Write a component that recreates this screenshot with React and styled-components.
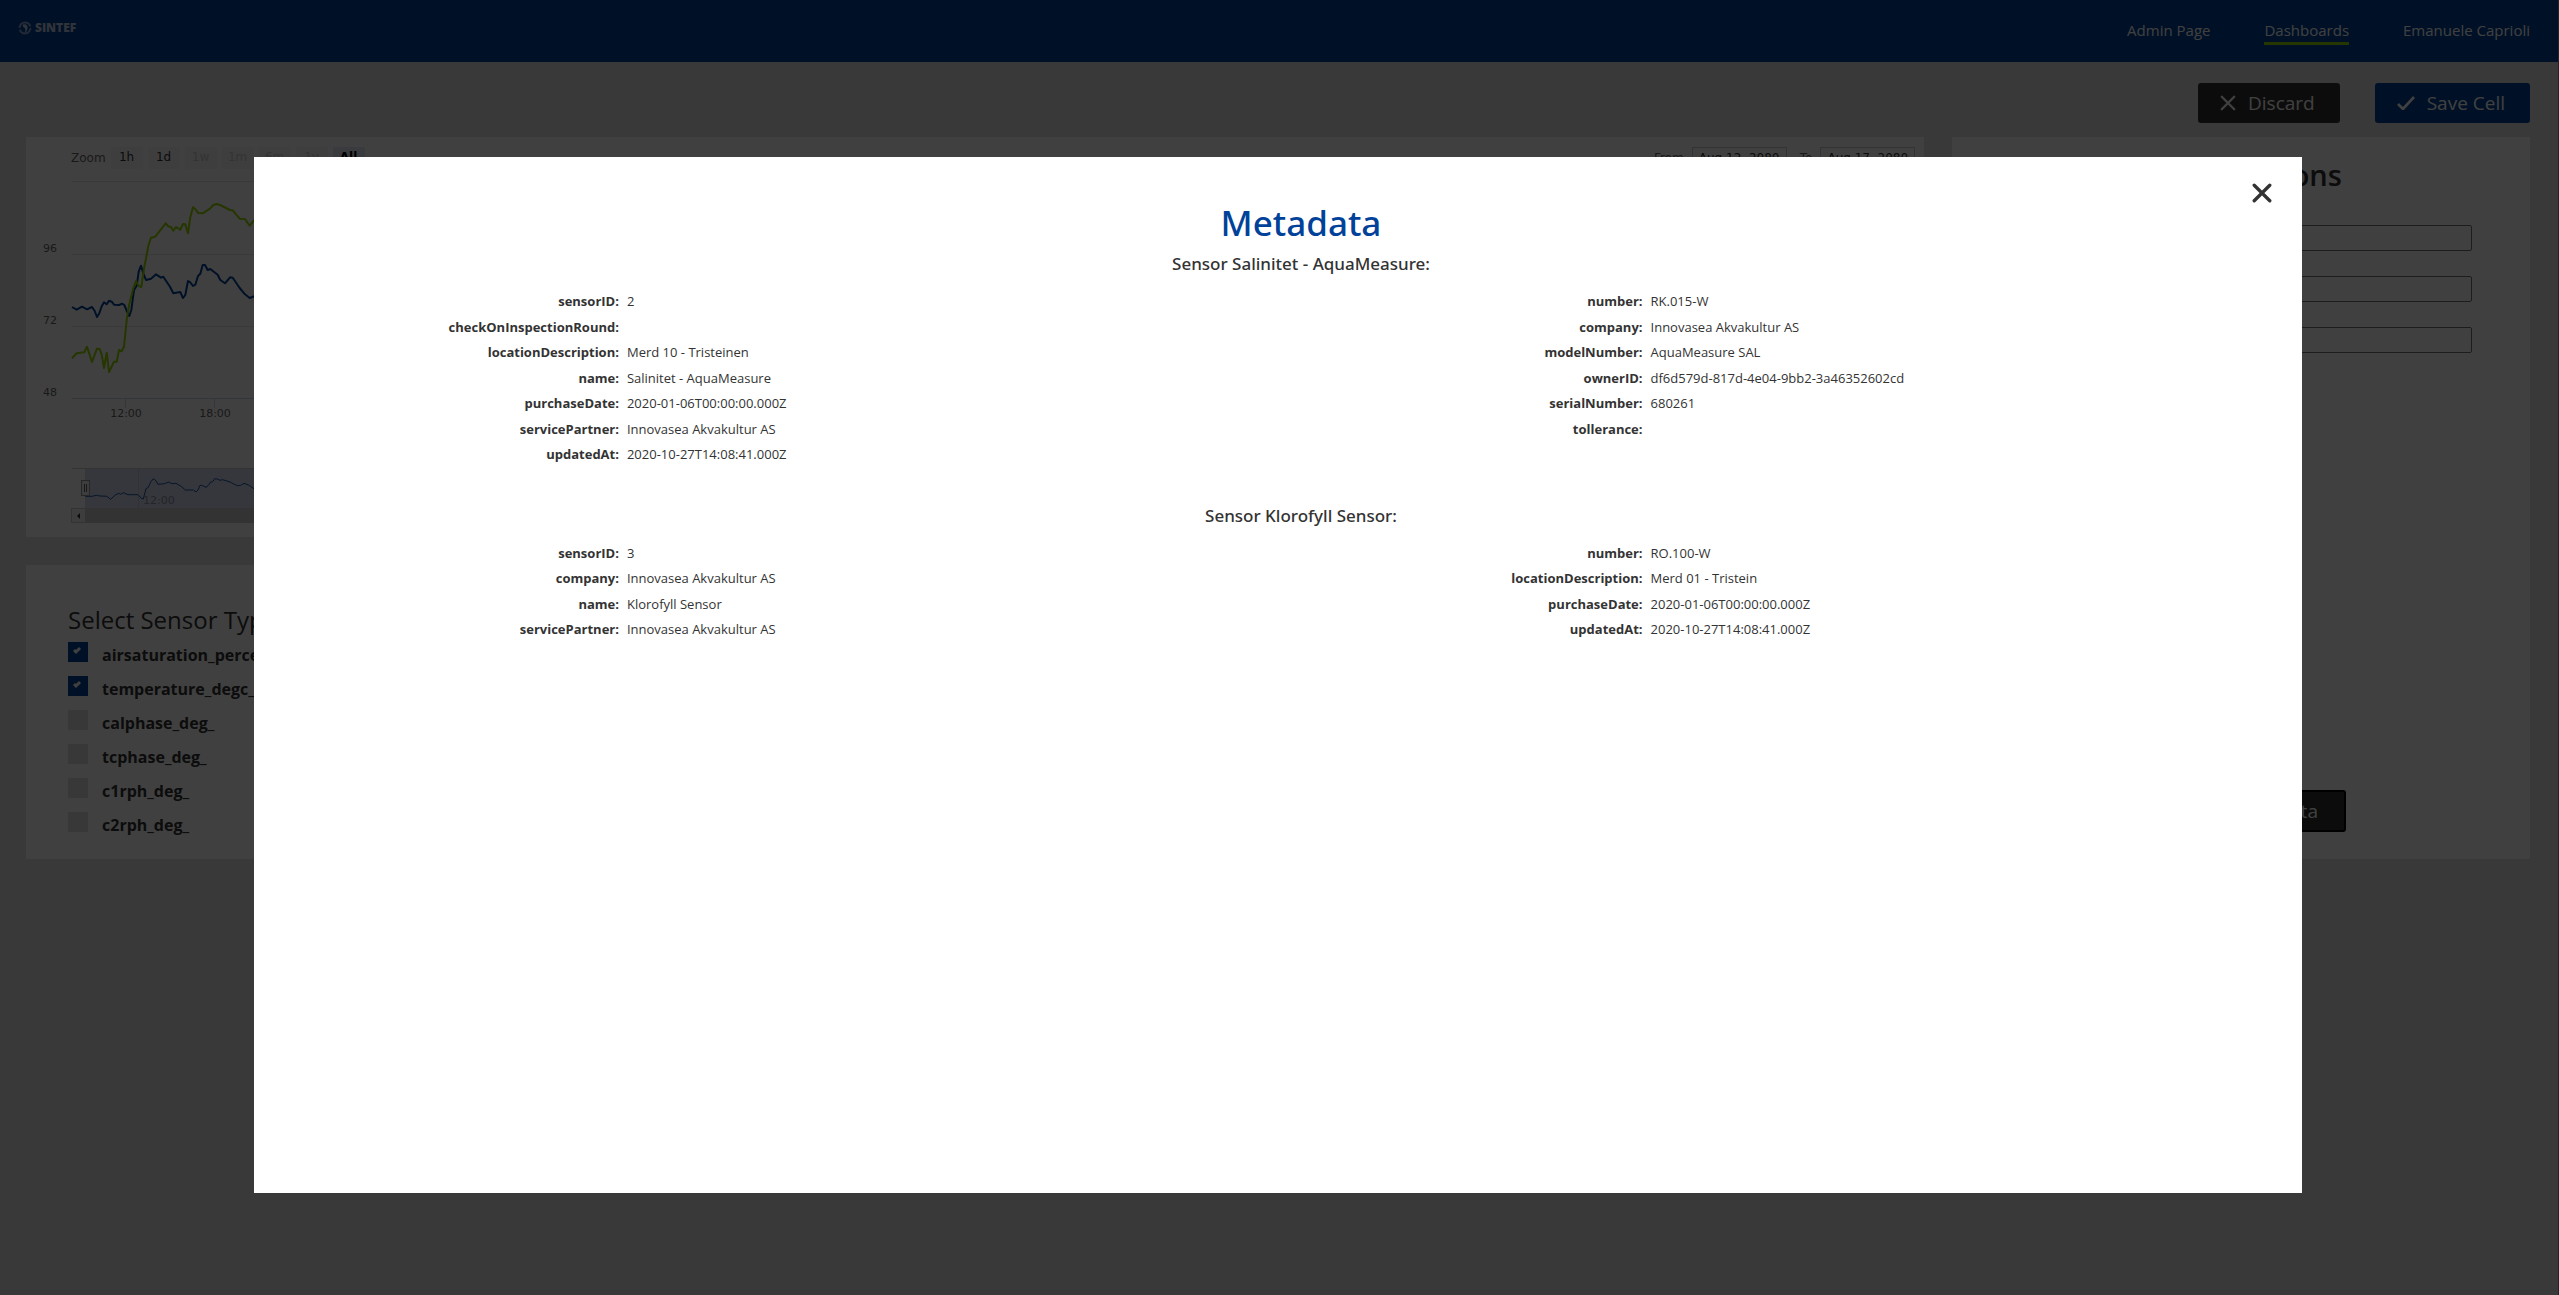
import React from "react";
import styled, { createGlobalStyle } from "styled-components";

const GlobalStyle = createGlobalStyle`
  *, *::before, *::after { box-sizing: border-box; }
  html, body, #root { min-height: 100vh; }
  body {
    margin: 0;
    background: #e4e4e4;
    color: #333;
    font-family: "Open Sans", "Noto Sans", sans-serif;
    font-size: 16px;
    overflow: hidden;
  }
  h1, h2, h3, p, dl, dd, ul { margin: 0; padding: 0; font-weight: 500; }
  button, input { font: inherit; color: inherit; }
`;

const Header = styled.header`
  display: flex;
  align-items: center;
  justify-content: space-between;
  height: 62px;
  padding: 2px 29px 0 18px;
  background: #004299;
  color: #fff;
`;

const Brand = styled.a`
  display: flex;
  align-items: center;
  gap: 3px;
  margin-bottom: 8px;
  color: rgba(255, 255, 255, 0.75);
  font-size: 12px;
  font-weight: 800;
  line-height: 14px;
  text-decoration: none;
`;

const Nav = styled.nav`
  display: flex;
  gap: 54px;
`;

const NavLink = styled.a`
  padding-bottom: 1px;
  border-bottom: 3px solid ${(p) => (p.$active ? "#93d500" : "transparent")};
  color: inherit;
  font-size: 15px;
  line-height: 22px;
  text-decoration: none;
`;

const Main = styled.main`
  padding: 21px 29px 28px 26px;
`;

const Actions = styled.div`
  display: flex;
  justify-content: flex-end;
  gap: 35px;
  margin-bottom: 14px;
`;

const Button = styled.button`
  display: flex;
  align-items: center;
  justify-content: center;
  gap: 12px;
  height: ${(p) => (p.$focused ? 42 : 40)}px;
  padding: ${(p) => (p.$focused ? "0 26px" : "0 25px 0 22px")};
  border: ${(p) => (p.$focused ? "2px solid #000" : "0")};
  border-radius: 3px;
  background: ${(p) => (p.$primary ? "#004299" : "#333")};
  color: #fff;
  font-size: 19px;
`;

const Board = styled.div`
  display: grid;
  grid-template-columns: minmax(0, 23fr) minmax(0, 7fr);
  gap: 28px;
`;

const Column = styled.div`
  display: flex;
  flex-direction: column;
  gap: 28px;
`;

const Card = styled.section`
  background: #fff;
`;

const ChartCard = styled(Card)`
  height: 400px;
  padding-top: 10px;
  color: #333;
  font-family: "DejaVu Sans", sans-serif;
  font-size: 12px;
`;

const ChartBar = styled.div`
  display: flex;
  justify-content: space-between;
  padding: 0 9px 0 45px;
  color: #666;
`;

const ChartGroup = styled.div`
  display: flex;
  align-items: center;
  gap: 5px;
`;

const RangeButton = styled.button`
  width: 32px;
  height: 22px;
  padding: 0 0 2px;
  border: 0;
  border-radius: 2px;
  background: ${(p) => (p.$active ? "#e6ebf5" : "#f7f7f7")};
  color: ${(p) => (p.$active ? "#000" : p.disabled ? "#ccc" : "#333")};
  font-weight: ${(p) => (p.$active ? 700 : 400)};
`;

const DateLabel = styled.label`
  display: flex;
  align-items: center;
  gap: 8px;
  margin-left: 8px;
`;

const DateInput = styled.input`
  width: 95px;
  height: 22px;
  padding: 0;
  border: 1px solid #ccc;
  background: transparent;
  color: #333;
  text-align: center;
`;

const Plot = styled.svg`
  display: block;
  width: 100%;
  height: 362px;
`;

const TypesCard = styled(Card)`
  height: 294px;
  padding: 37px 42px 0;
`;

const TypesTitle = styled.h2`
  margin-bottom: 1px;
  font-size: 24px;
  font-weight: 400;
  line-height: 36px;
`;

const TypeRow = styled.label`
  display: flex;
  align-items: flex-start;
  gap: 14px;
  height: 34px;
  padding-top: 3px;
  font-size: 16px;
  font-weight: 700;
  line-height: 26px;
`;

const TypeBox = styled.input`
  appearance: none;
  width: 20px;
  height: 20px;
  margin: 0;
  background: #ddd;
  &:checked {
    background: #004299
      url("data:image/svg+xml,%3Csvg xmlns='http://www.w3.org/2000/svg' width='20' height='20'%3E%3Cpath d='M6 8l2 2 4-4' fill='none' stroke='%23fff' stroke-width='3'/%3E%3C/svg%3E");
  }
`;

const OptionsCard = styled(Card)`
  display: flex;
  flex-direction: column;
  align-items: center;
  padding: 16px 58px 27px;
`;

const OptionsTitle = styled.h2`
  font-size: 29px;
  font-weight: 600;
  line-height: 44px;
`;

const OptionsForm = styled.form`
  display: flex;
  flex-direction: column;
  gap: 25px;
  width: 100%;
  margin: 28px 0 auto;
`;

const OptionField = styled.label`
  display: grid;
  grid-template-columns: 1fr 2fr;
  align-items: center;
  height: 26px;
`;

const OptionInput = styled.input`
  width: 100%;
  height: 26px;
  border: 1px solid #767676;
  border-radius: 2px;
  background: #fff;
`;

const Overlay = styled.div`
  position: fixed;
  inset: 0;
  display: flex;
  justify-content: center;
  align-items: flex-start;
  padding: 157px 2px 0 0;
  border-right: 1px solid #20252a;
  background: rgba(0, 0, 0, 0.75);
`;

const Modal = styled.div`
  position: relative;
  width: 80vw;
  height: 80vh;
  padding: 39px 0 0 46px;
  background: #fff;
  text-align: center;
`;

const CloseButton = styled.button`
  position: absolute;
  top: 24px;
  right: 28px;
  width: 24px;
  height: 24px;
  padding: 2px;
  border: 0;
  background: none;
`;

const Title = styled.h1`
  color: #004299;
  font-family: "Noto Sans", "Open Sans", sans-serif;
  font-size: 35px;
  font-weight: 500;
  line-height: 54px;
`;

const SensorSection = styled.section`
  margin-bottom: 36px;
`;

const SensorTitle = styled.h2`
  margin-bottom: 10px;
  font-family: "Noto Sans", "Open Sans", sans-serif;
  font-size: 17px;
  font-weight: 500;
  line-height: 27px;
`;

const SensorColumns = styled.div`
  display: grid;
  grid-template-columns: 40vw 40vw;
  justify-content: center;
  align-items: start;
  padding-left: 6px;
`;

const Fields = styled.dl`
  font-size: 17px;
  line-height: 1.5;
`;

const Field = styled.div`
  display: grid;
  grid-template-columns: 1fr 2fr;
  gap: 8px;
`;

const Key = styled.dt`
  text-align: right;
  & > span { font-size: 13px; font-weight: 700; }
`;

const Value = styled.dd`
  text-align: left;
  & > span { font-size: 13px; font-weight: 400; }
`;

const GREEN = [[216,685],[230,670],[253,667],[261,650],[276,696],[291,656],[299,657],[305,674],[312,714],[320,668],[327,726],[342,695],[350,695],[357,660],[365,664],[372,650],[380,570],[388,522],[400,475],[408,453],[416,468],[424,471],[432,415],[438,385],[445,348],[453,323],[466,320],[497,280],[505,289],[513,291],[520,302],[528,291],[541,299],[549,282],[556,283],[564,310],[571,262],[579,232],[586,237],[594,249],[608,250],[630,236],[640,225],[650,222],[660,225],[690,240],[698,241],[719,266],[735,267],[749,287],[770,262]];
const BLUE = [[216,531],[230,539],[246,530],[261,538],[276,531],[284,543],[291,561],[298,550],[305,529],[312,517],[320,523],[327,512],[335,515],[342,524],[358,525],[366,521],[373,525],[380,542],[388,558],[394,540],[402,480],[410,467],[416,425],[423,407],[430,430],[438,450],[453,446],[468,433],[483,443],[490,440],[510,470],[520,490],[541,486],[549,504],[556,495],[564,453],[571,457],[579,468],[586,464],[594,438],[601,431],[608,405],[615,405],[623,420],[631,417],[653,434],[661,450],[675,460],[690,442],[698,443],[719,474],[735,493],[749,504],[770,496]];
const OVERVIEW = [[256,1099],[276,1099],[290,1096],[300,1098],[320,1099],[332,1108],[346,1095],[356,1090],[362,1093],[370,1088],[384,1094],[414,1094],[424,1105],[430,1107],[438,1076],[445,1072],[452,1056],[460,1046],[466,1050],[474,1063],[494,1061],[506,1056],[516,1061],[528,1060],[545,1070],[556,1080],[580,1080],[588,1086],[594,1080],[600,1066],[608,1067],[618,1072],[624,1067],[632,1056],[638,1055],[644,1046],[652,1047],[660,1051],[668,1049],[690,1056],[712,1067],[722,1066],[732,1060],[746,1065],[770,1082]];

// Samples are stored at three units per pixel.
const toLine = (samples) =>
  samples.map(([x, y]) => `${(x / 3 - 26).toFixed(1)},${(y / 3 - 39).toFixed(1)}`).join(" ");

const Chart = () => (
  <Plot role="img" aria-label="Sensor readings">
    {[12, 85, 157].map((y) => (
      <line key={y} x1="46" x2="99%" y1={y + 0.5} y2={y + 0.5} stroke="#e6e6e6" />
    ))}
    <line x1="46" x2="99%" y1="229.5" y2="229.5" stroke="#ccd6eb" />
    <path d="M99.5 229v10M188.5 229v10" stroke="#ccd6eb" />
    <g fill="#666" fontSize="11">
      <text x="17" y="83">96</text>
      <text x="17" y="155">72</text>
      <text x="17" y="227">48</text>
      <text x="100" y="248" textAnchor="middle">12:00</text>
      <text x="189" y="248" textAnchor="middle">18:00</text>
    </g>
    <polyline points={toLine(BLUE)} fill="none" stroke="#004299" strokeWidth="2" strokeLinejoin="round" />
    <polyline points={toLine(GREEN)} fill="none" stroke="#93d500" strokeWidth="2" strokeLinejoin="round" />
    <path d="M112.5 299v40" stroke="#e6e6e6" />
    <text x="117" y="335" fill="#999" fontSize="11">12:00</text>
    <polyline points={toLine(OVERVIEW)} fill="none" stroke="#004299" strokeWidth="1" />
    <rect x="59" y="299" width="96%" height="40" fill="#6685c2" fillOpacity="0.3" />
    <line x1="46" x2="99%" y1="299.5" y2="299.5" stroke="#ccc" />
    <rect x="55.5" y="311.5" width="8" height="15" fill="#f2f2f2" stroke="#999" />
    <path d="M58.5 315v8M60.5 315v8" stroke="#666" />
    <rect x="59" y="339" width="96%" height="15" fill="#ccc" />
    <rect x="45.5" y="339.5" width="14" height="14" fill="#f2f2f2" stroke="#ccc" />
    <path d="M54 344v6l-3-3z" fill="#333" />
  </Plot>
);

const SintefMark = () => (
  <svg width="14" height="14" viewBox="0 0 14 14" aria-hidden="true">
    <circle cx="7" cy="7" r="5.5" fill="none" stroke="currentColor" strokeWidth="2" strokeDasharray="15 2" opacity="0.7" />
    <path d="M5 3.5c3-1 5 1 4.5 4C9.2 9.5 8 11 6.5 12 8 9 7.5 7.5 6 6.5 5 6 4.5 5 5 3.5z" fill="currentColor" />
  </svg>
);

const CrossIcon = ({ size, width }) => (
  <svg width={size} height={size} viewBox="0 0 18 18" aria-hidden="true">
    <path d="M2 2l14 14M16 2L2 16" fill="none" stroke="currentColor" strokeWidth={width} strokeLinecap="round" />
  </svg>
);

const CheckIcon = () => (
  <svg width="18" height="14" viewBox="0 0 18 14" aria-hidden="true">
    <path d="M1 8l5 5L17 1" fill="none" stroke="currentColor" strokeWidth="2.6" />
  </svg>
);

const RANGES = [
  { label: "1h" },
  { label: "1d" },
  { label: "1w", disabled: true },
  { label: "1m", disabled: true },
  { label: "6m", disabled: true },
  { label: "1y", disabled: true },
  { label: "All", active: true },
];

const TYPES = [
  ["airsaturation_percent_", true],
  ["temperature_degc_", true],
  ["calphase_deg_", false],
  ["tcphase_deg_", false],
  ["c1rph_deg_", false],
  ["c2rph_deg_", false],
];

const SENSORS = [
  {
    name: "Sensor Salinitet - AquaMeasure:",
    columns: [
      [
        ["sensorID", "2"],
        ["checkOnInspectionRound", ""],
        ["locationDescription", "Merd 10 - Tristeinen"],
        ["name", "Salinitet - AquaMeasure"],
        ["purchaseDate", "2020-01-06T00:00:00.000Z"],
        ["servicePartner", "Innovasea Akvakultur AS"],
        ["updatedAt", "2020-10-27T14:08:41.000Z"],
      ],
      [
        ["number", "RK.015-W"],
        ["company", "Innovasea Akvakultur AS"],
        ["modelNumber", "AquaMeasure SAL"],
        ["ownerID", "df6d579d-817d-4e04-9bb2-3a46352602cd"],
        ["serialNumber", "680261"],
        ["tollerance", ""],
      ],
    ],
  },
  {
    name: "Sensor Klorofyll Sensor:",
    columns: [
      [
        ["sensorID", "3"],
        ["company", "Innovasea Akvakultur AS"],
        ["name", "Klorofyll Sensor"],
        ["servicePartner", "Innovasea Akvakultur AS"],
      ],
      [
        ["number", "RO.100-W"],
        ["locationDescription", "Merd 01 - Tristein"],
        ["purchaseDate", "2020-01-06T00:00:00.000Z"],
        ["updatedAt", "2020-10-27T14:08:41.000Z"],
      ],
    ],
  },
];

export default function App() {
  return (
    <>
      <GlobalStyle />
      <Header>
        <Brand href="#home">
          <SintefMark />
          SINTEF
        </Brand>
        <Nav>
          <NavLink href="#admin">Admin Page</NavLink>
          <NavLink href="#dashboards" $active>Dashboards</NavLink>
          <NavLink href="#profile">Emanuele Caprioli</NavLink>
        </Nav>
      </Header>
      <Main>
        <Actions>
          <Button type="button">
            <CrossIcon size={16} width={2.6} />
            Discard
          </Button>
          <Button type="button" $primary>
            <CheckIcon />
            Save Cell
          </Button>
        </Actions>
        <Board>
          <Column>
            <ChartCard>
              <ChartBar>
                <ChartGroup>
                  Zoom
                  {RANGES.map((r) => (
                    <RangeButton key={r.label} type="button" disabled={r.disabled} $active={r.active}>
                      {r.label}
                    </RangeButton>
                  ))}
                </ChartGroup>
                <ChartGroup>
                  <DateLabel>
                    From
                    <DateInput type="text" defaultValue="Aug 12, 2080" />
                  </DateLabel>
                  <DateLabel>
                    To
                    <DateInput type="text" defaultValue="Aug 17, 2080" />
                  </DateLabel>
                </ChartGroup>
              </ChartBar>
              <Chart />
            </ChartCard>
            <TypesCard>
              <TypesTitle>Select Sensor Types</TypesTitle>
              {TYPES.map(([name, checked]) => (
                <TypeRow key={name}>
                  <TypeBox type="checkbox" defaultChecked={checked} />
                  {name}
                </TypeRow>
              ))}
            </TypesCard>
          </Column>
          <OptionsCard>
            <OptionsTitle>Select Options</OptionsTitle>
            <OptionsForm>
              {["Title", "From", "To"].map((name) => (
                <OptionField key={name}>
                  {name}
                  <OptionInput type="text" />
                </OptionField>
              ))}
            </OptionsForm>
            <Button type="button" $focused>Display Metadata</Button>
          </OptionsCard>
        </Board>
      </Main>
      <Overlay>
        <Modal role="dialog" aria-modal="true" aria-labelledby="metadata-title">
          <CloseButton type="button" aria-label="Close">
            <CrossIcon size={20} width={3} />
          </CloseButton>
          <Title id="metadata-title">Metadata</Title>
          {SENSORS.map((sensor) => (
            <SensorSection key={sensor.name}>
              <SensorTitle>{sensor.name}</SensorTitle>
              <SensorColumns>
                {sensor.columns.map((fields, i) => (
                  <Fields key={i}>
                    {fields.map(([key, value]) => (
                      <Field key={key}>
                        <Key><span>{key}:</span></Key>
                        <Value><span>{value}</span></Value>
                      </Field>
                    ))}
                  </Fields>
                ))}
              </SensorColumns>
            </SensorSection>
          ))}
        </Modal>
      </Overlay>
    </>
  );
}
